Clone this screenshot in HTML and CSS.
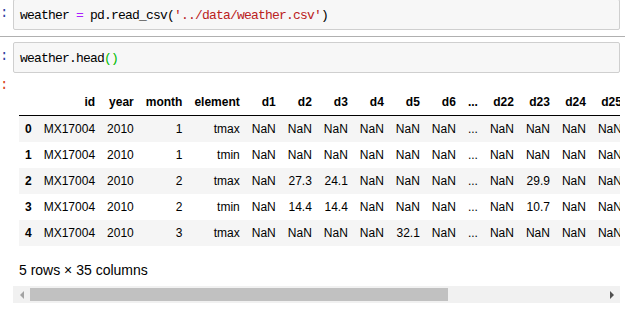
FILE: index.html
```html
<!DOCTYPE html>
<html>
<head>
<meta charset="utf-8">
<link rel="stylesheet" href="styles.css">
</head>
<body>
<div class="notebook">
  <div class="cell">
    <div class="prompt prompt-in">:</div>
    <div class="input-box"><pre class="code">weather <span class="op">=</span> pd.read_csv(<span class="str">'../data/weather.csv'</span>)</pre></div>
  </div>
  <div class="divider"></div>
  <div class="cell">
    <div class="prompt prompt-in">:</div>
    <div class="input-box"><pre class="code">weather.head<span class="br">()</span></pre></div>
  </div>
  <div class="output">
    <div class="prompt prompt-out">:</div>
    <div class="output-area">
      <div class="frame">
        <table class="dataframe">
          <thead>
            <tr><th></th><th>id</th><th>year</th><th>month</th><th>element</th><th>d1</th><th>d2</th><th>d3</th><th>d4</th><th>d5</th><th>d6</th><th>...</th><th>d22</th><th>d23</th><th>d24</th><th>d25</th><th>d26</th><th>d27</th><th>d28</th><th>d29</th><th>d30</th><th>d31</th></tr>
          </thead>
          <tbody>
            <tr><th>0</th><td>MX17004</td><td>2010</td><td>1</td><td>tmax</td><td>NaN</td><td>NaN</td><td>NaN</td><td>NaN</td><td>NaN</td><td>NaN</td><td>...</td><td>NaN</td><td>NaN</td><td>NaN</td><td>NaN</td><td>NaN</td><td>NaN</td><td>NaN</td><td>NaN</td><td>27.8</td><td>NaN</td></tr>
            <tr><th>1</th><td>MX17004</td><td>2010</td><td>1</td><td>tmin</td><td>NaN</td><td>NaN</td><td>NaN</td><td>NaN</td><td>NaN</td><td>NaN</td><td>...</td><td>NaN</td><td>NaN</td><td>NaN</td><td>NaN</td><td>NaN</td><td>NaN</td><td>NaN</td><td>NaN</td><td>14.5</td><td>NaN</td></tr>
            <tr><th>2</th><td>MX17004</td><td>2010</td><td>2</td><td>tmax</td><td>NaN</td><td>27.3</td><td>24.1</td><td>NaN</td><td>NaN</td><td>NaN</td><td>...</td><td>NaN</td><td>29.9</td><td>NaN</td><td>NaN</td><td>NaN</td><td>NaN</td><td>NaN</td><td>NaN</td><td>NaN</td><td>NaN</td></tr>
            <tr><th>3</th><td>MX17004</td><td>2010</td><td>2</td><td>tmin</td><td>NaN</td><td>14.4</td><td>14.4</td><td>NaN</td><td>NaN</td><td>NaN</td><td>...</td><td>NaN</td><td>10.7</td><td>NaN</td><td>NaN</td><td>NaN</td><td>NaN</td><td>NaN</td><td>NaN</td><td>NaN</td><td>NaN</td></tr>
            <tr><th>4</th><td>MX17004</td><td>2010</td><td>3</td><td>tmax</td><td>NaN</td><td>NaN</td><td>NaN</td><td>NaN</td><td>32.1</td><td>NaN</td><td>...</td><td>NaN</td><td>NaN</td><td>NaN</td><td>NaN</td><td>NaN</td><td>NaN</td><td>NaN</td><td>NaN</td><td>NaN</td><td>NaN</td></tr>
          </tbody>
        </table>
        <p class="shape">5 rows × 35 columns</p>
      </div>
      <div class="scrollbar">
        <div class="sb-button"><span class="arrow-left"></span></div>
        <div class="sb-thumb"></div>
        <div class="sb-track"></div>
        <div class="sb-button"><span class="arrow-right"></span></div>
      </div>
    </div>
  </div>
</div>
</body>
</html>
```

FILE: styles.css
```css
html, body {
  margin: 0;
  padding: 0;
  background: #ffffff;
}

.notebook {
  width: 625px;
  margin-top: -1px;
}

.cell {
  display: flex;
}

.prompt {
  width: 13px;
  flex: none;
  font-family: "Liberation Mono", monospace;
  font-size: 14px;
  line-height: 17px;
}

.prompt-in {
  color: #303F9F;
  padding-top: 6px;
}

.prompt-out {
  color: #D84315;
  margin-top: -6px;
}

.input-box {
  flex: 1;
  margin-right: 5px;
  height: 29px;
  border: 1px solid #cfcfcf;
  border-radius: 2px;
  background: #f7f7f7;
  box-sizing: content-box;
}

.code {
  margin: 0;
  padding: 7px 6px 5px 6px;
  font-family: "Liberation Mono", monospace;
  font-size: 13px;
  letter-spacing: -0.8px;
  line-height: 17px;
  color: #000000;
  white-space: pre;
}

.op { color: #AA22FF; }
.str { color: #BA2121; }
.br { color: #00bb00; }

.divider {
  height: 1px;
  background: #b0b0b0;
  margin: 6px 0 5px 0;
}

.output {
  display: flex;
  margin-top: 10px;
}

.output-area {
  flex: 1;
  margin-right: 5px;
  min-width: 0;
}

.frame {
  overflow: hidden;
  padding: 6px 0 6px 6px;
}

.dataframe {
  border-collapse: collapse;
  border-spacing: 0;
  border: none;
  color: #000000;
  font-family: "Liberation Sans", Arial, sans-serif;
  font-size: 12px;
}

.dataframe thead {
  border-bottom: 1px solid #000000;
}

.dataframe th,
.dataframe td {
  text-align: right;
  vertical-align: middle;
  padding: 6px;
  line-height: normal;
  white-space: nowrap;
  border: none;
}

.dataframe th {
  font-weight: bold;
}

.dataframe td {
  font-weight: normal;
}

.dataframe tbody tr:nth-child(odd) {
  background: #f5f5f5;
}

.shape {
  margin: 14px 0 0 0;
  font-family: "Liberation Sans", Arial, sans-serif;
  font-size: 14px;
  line-height: 20px;
  color: #000000;
}

.scrollbar {
  display: flex;
  height: 17px;
  background: #f1f1f1;
}

.sb-button {
  width: 17px;
  flex: none;
  display: flex;
  align-items: center;
  justify-content: center;
}

.sb-thumb {
  width: 418px;
  flex: none;
  margin: 2px 0;
  background: #c1c1c1;
}

.sb-track {
  flex: 1;
}

.arrow-left {
  width: 0;
  height: 0;
  border-top: 4px solid transparent;
  border-bottom: 4px solid transparent;
  border-right: 4px solid #a3a3a3;
}

.arrow-right {
  width: 0;
  height: 0;
  border-top: 4px solid transparent;
  border-bottom: 4px solid transparent;
  border-left: 4px solid #505050;
}
```
